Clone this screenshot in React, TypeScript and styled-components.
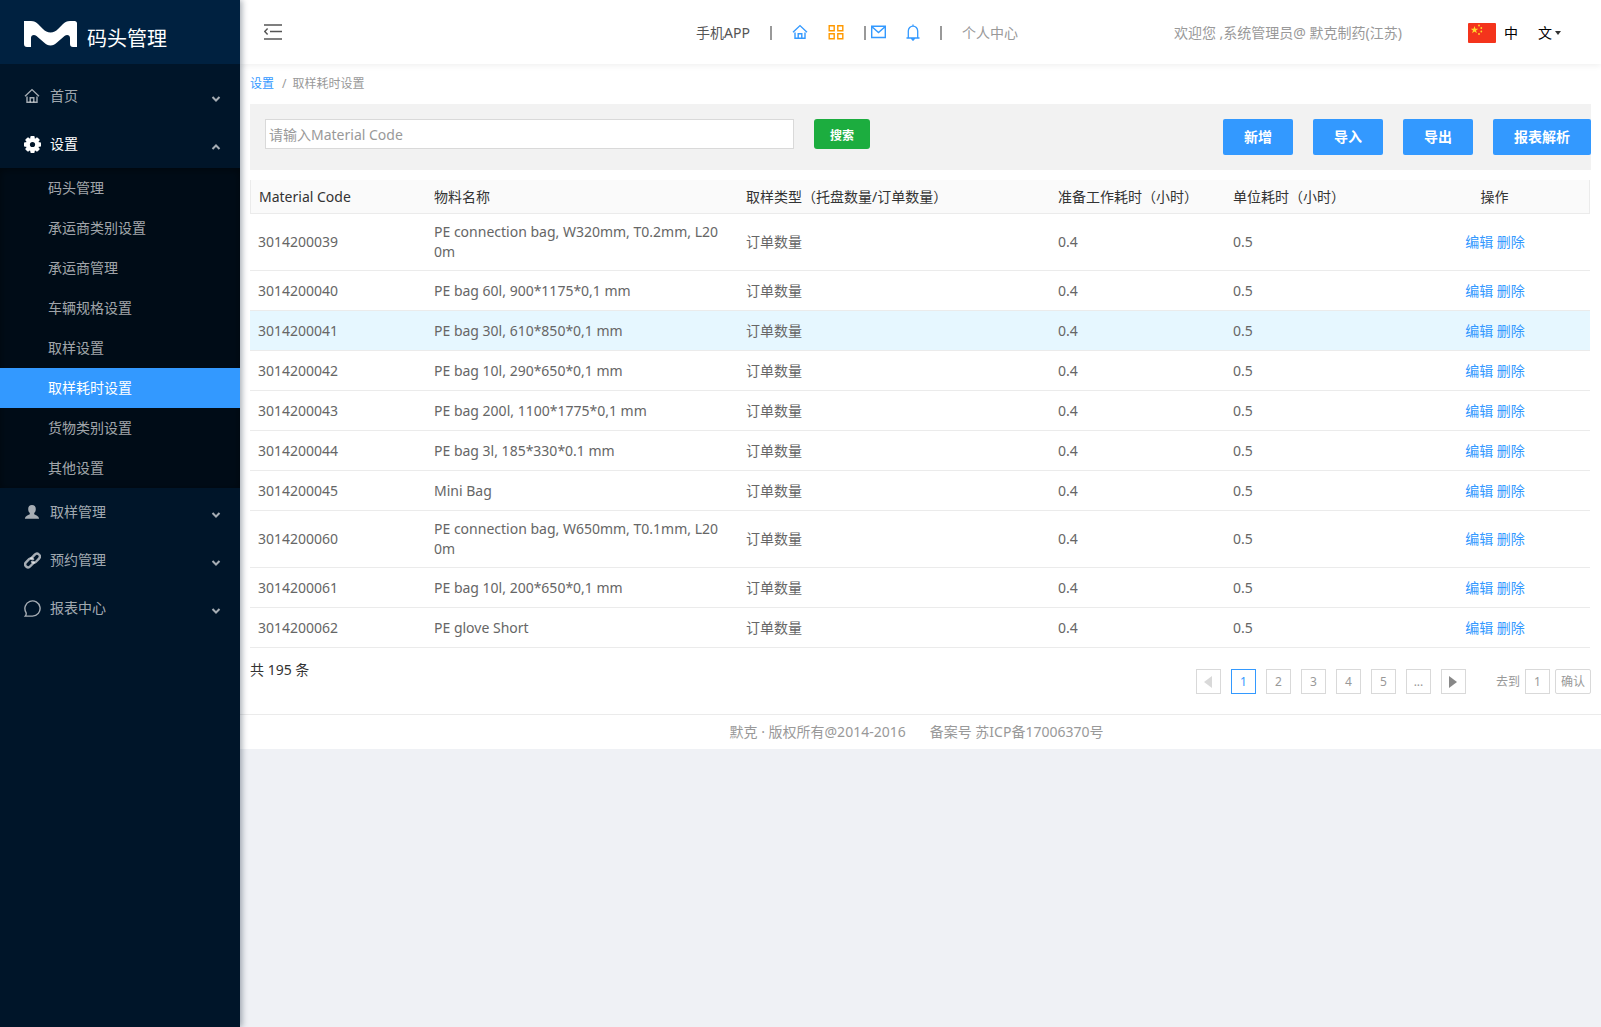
import React, { useState } from "react";
import styled, { createGlobalStyle, css } from "styled-components";

const BLUE = "#3399ff";

const GlobalStyle = createGlobalStyle`
  *, *::before, *::after { box-sizing: border-box; }
  html, body, #root { min-height: 100vh; }
  body {
    margin: 0;
    background: #eff1f5;
    color: #333;
    font: 14px/20px "Noto Sans", "Noto Sans CJK SC", sans-serif;
  }
  button, input, select { font: inherit; }
  a { text-decoration: none; }
`;

const Shell = styled.div`
  display: flex;
  min-height: 100vh;
`;

const Sidebar = styled.aside`
  position: relative;
  z-index: 1;
  flex: none;
  width: 240px;
  background: #001529;
  box-shadow: 2px 0 6px rgba(0, 21, 41, 0.35);
`;

const Brand = styled.div`
  display: flex;
  align-items: center;
  gap: 10px;
  height: 64px;
  padding: 4px 24px 0;
  background: #002140;
  color: #fff;
`;

const BrandMark = styled.svg`
  width: 53px;
  height: 26px;
`;

const BrandName = styled.span`
  padding-top: 10px;
  font-size: 20px;
  line-height: 24px;
`;

const Menu = styled.ul`
  margin: 0;
  padding: 8px 0 0;
  list-style: none;
`;

const MenuButton = styled.button<{ $open?: boolean }>`
  display: flex;
  align-items: center;
  gap: 10px;
  width: 100%;
  height: 48px;
  padding: 0 18px 0 24px;
  border: 0;
  background: none;
  color: ${(p) => (p.$open ? "#fff" : "rgba(255, 255, 255, 0.65)")};
  text-align: left;
  cursor: pointer;

  svg { flex: none; }
`;

const MenuIcon = styled.span`
  display: flex;
  justify-content: center;
  width: 16px;
`;

const MenuLabel = styled.span`
  flex: 1;
`;

const Chevron = styled.svg<{ $up?: boolean }>`
  width: 12px;
  height: 12px;
  margin-top: 6px;
  color: rgba(255, 255, 255, 0.65);
  ${(p) => p.$up && css`transform: rotate(180deg);`}
`;

const SubMenu = styled.ul`
  margin: 0;
  padding: 0;
  list-style: none;
  background: #000c17;
  box-shadow: inset 0 2px 8px rgba(0, 0, 0, 0.45);
`;

const SubLink = styled.a<{ $active?: boolean }>`
  display: block;
  padding: 0 48px;
  line-height: 40px;
  color: ${(p) => (p.$active ? "#fff" : "rgba(255, 255, 255, 0.65)")};
  background: ${(p) => (p.$active ? BLUE : "transparent")};
`;

const Main = styled.div`
  flex: 1;
  min-width: 0;
`;

const TopBar = styled.header`
  position: relative;
  display: flex;
  align-items: center;
  height: 64px;
  padding: 2px 40px 0 24px;
  background: #fff;
  box-shadow: 0 2px 6px rgba(0, 0, 0, 0.06);
`;

const IconButton = styled.button`
  display: flex;
  padding: 0 0 2px;
  border: 0;
  background: none;
  color: #555;
  cursor: pointer;
`;

const QuickNav = styled.nav`
  display: flex;
  align-items: center;
  flex: 1;
  justify-content: flex-end;
  gap: 20px;
`;

const NavText = styled.a<{ $dark?: boolean }>`
  color: ${(p) => (p.$dark ? "#555" : "#999")};
  white-space: nowrap;
`;

const NavIcon = styled.a<{ $color: string }>`
  display: flex;
  padding-bottom: 2px;
  color: ${(p) => p.$color};
`;

const MailGroup = styled.span`
  display: flex;
  align-items: center;
  gap: 5px;
`;

const Bar = styled.span`
  width: 2px;
  height: 14px;
  background: #999;
`;

const Welcome = styled.span`
  margin: 0 66px 0 156px;
  color: #999;
  white-space: nowrap;
`;

const Language = styled.div`
  display: flex;
  align-items: center;
  gap: 8px;
  color: #000;
`;

const LanguageButton = styled.button`
  display: flex;
  align-items: center;
  gap: 3px;
  margin-left: 12px;
  padding: 0;
  border: 0;
  background: none;
  color: #000;
  cursor: pointer;
`;

const Page = styled.main`
  padding: 10px 10px 20px;
  background: #fff;
`;

const Crumbs = styled.nav`
  display: flex;
  gap: 6px;
  margin-bottom: 10px;
  color: #999;
  font-size: 12px;

  a { margin-right: 2px; color: ${BLUE}; }
`;

const Toolbar = styled.form`
  display: flex;
  align-items: flex-start;
  gap: 20px;
  min-height: 66px;
  padding: 15px 0 15px 15px;
  margin-bottom: 10px;
  background: #f2f2f2;
`;

const SearchInput = styled.input`
  flex: 0 1 529px;
  min-width: 120px;
  height: 30px;
  padding: 0 3px;
  border: 1px solid #d9d9d9;
  outline: 0;
  color: #333;

  &::placeholder { color: #999; }
`;

const SearchButton = styled.button`
  width: 56px;
  height: 30px;
  padding: 3px 0 0;
  border: 0;
  border-radius: 3px;
  background: #1cad3f;
  color: #fff;
  font-size: 12px;
  font-weight: 700;
`;

const Actions = styled.div`
  display: flex;
  gap: 20px;
  margin-left: auto;
`;

const ActionButton = styled.button`
  height: 36px;
  padding: 0 21px;
  border: 0;
  border-radius: 2px;
  background: ${BLUE};
  color: #fff;
  font-weight: 700;
  white-space: nowrap;
`;

const Table = styled.table`
  width: calc(100% - 1px);
  table-layout: fixed;
  border-spacing: 0;
  border-collapse: separate;
`;

const HeadCell = styled.th<{ $center?: boolean }>`
  height: 34px;
  padding: 0 8px;
  border-bottom: 1px solid #ebebeb;
  background: #fafafa;
  font-weight: 400;
  text-align: ${(p) => (p.$center ? "center" : "left")};
  white-space: nowrap;

  &:first-child { border-left: 1px solid #ebebeb; }
  &:last-child { border-right: 1px solid #ebebeb; }
`;

const Row = styled.tr<{ $active?: boolean }>`
  background: ${(p) => (p.$active ? "#e6f7ff" : "#fff")};
`;

const Cell = styled.td<{ $center?: boolean }>`
  height: 40px;
  padding: ${(p) => (p.$center ? "8px" : "8px 16px 8px 8px")};
  border-bottom: 1px solid #ebebeb;
  color: #666;
  text-align: ${(p) => (p.$center ? "center" : "left")};
  word-break: break-all;

  a { color: ${BLUE}; }
`;

const TableFoot = styled.div`
  display: flex;
  justify-content: space-between;
  padding-top: 12px;
`;

const Pager = styled.div`
  display: flex;
  align-items: flex-start;
  gap: 10px;
  padding-top: 9px;
  color: #999;
  font-size: 12px;
`;

const boxed = css`
  width: 25px;
  height: 25px;
  padding: 0;
  border: 1px solid #d9d9d9;
  background: #fff;
  color: #999;
  text-align: center;
`;

const PageButton = styled.button<{ $active?: boolean }>`
  ${boxed}
  display: flex;
  align-items: center;
  justify-content: center;
  ${(p) => p.$active && css`border-color: ${BLUE}; color: ${BLUE};`}
`;

const Jump = styled.div`
  display: flex;
  align-items: center;
  gap: 5px;
  margin-left: 20px;
`;

const JumpInput = styled.input`
  ${boxed}
`;

const JumpButton = styled.button`
  ${boxed}
  width: 36px;
  border-radius: 2px;
`;

const Footer = styled.footer`
  display: flex;
  justify-content: center;
  gap: 24px;
  padding: 7px 8px 7px 0;
  border-top: 1px solid #ebebeb;
  background: #fff;
  color: #999;
`;

const HomeIcon = () => (
  <svg width="16" height="16" viewBox="0 0 16 16" fill="none" stroke="currentColor" strokeWidth="1.4">
    <path d="M1 8.300 8 1.600l7 6.700" />
    <path d="M3 8.500v5.800h10V8.500" />
    <path d="M6.200 14.300V9.700h3.600v4.600" />
  </svg>
);

const GearIcon = () => (
  <svg width="17" height="17" viewBox="0 0 17 17">
    <g fill="currentColor">
      {[0, 45, 90, 135].map((a) => (
        <rect key={a} x="6.3" y="0" width="4.4" height="17" rx="1" transform={`rotate(${a} 8.5 8.5)`} />
      ))}
      <circle cx="8.5" cy="8.5" r="6.6" />
    </g>
    <circle cx="8.5" cy="8.5" r="2.6" fill="#001529" />
  </svg>
);

const UserIcon = () => (
  <svg width="16" height="16" viewBox="0 0 16 16" fill="currentColor">
    <path d="M8 1c2.400 0 3.800 1.600 3.800 4 0 1.800-.6 3.300-1.600 4.100v1.200c.8.700 4.600 1.400 4.900 4.500H.9c.3-3.100 4.100-3.800 4.900-4.500V9.100C4.800 8.300 4.200 6.800 4.200 5c0-2.400 1.400-4 3.800-4z" />
  </svg>
);

const LinkIcon = () => (
  <svg width="17" height="17" viewBox="0 0 17 17" fill="none" stroke="currentColor" strokeWidth="2.4" strokeLinecap="round">
    <path d="M7.200 6.400 10.800 2.600a2.900 2.900 0 0 1 4.200 4L12 9.700a2.700 2.700 0 0 1-3.900.1" />
    <path d="M9.800 10.600 6.300 14.300a2.900 2.900 0 0 1-4.300-3.900L5.100 7.200a2.700 2.700 0 0 1 3.900 0" />
  </svg>
);

const ChatIcon = () => (
  <svg width="17" height="17" viewBox="0 0 17 17" fill="none" stroke="currentColor" strokeWidth="1.4">
    <path d="M1.200 16.100h7.300a7.600 7.600 0 1 0-6.600-3.800c.6 1.200.3 2.600-.7 3.800z" />
  </svg>
);

const FoldIcon = () => (
  <svg width="18" height="16" viewBox="0 0 18 16" fill="none" stroke="currentColor" strokeWidth="1.4">
    <path d="M0 1h18M6 7.500h12M0 15h18M3.600 4.600.8 7.500l2.800 2.900" />
  </svg>
);

const GridIcon = () => (
  <svg width="16" height="16" viewBox="0 0 16 16" fill="none" stroke="currentColor" strokeWidth="1.4">
    <path d="M1.200 1.700h5v5h-5zM9.800 1.700h5v5h-5zM1.200 9.800h5v5h-5zM9.800 9.800h5v5h-5z" />
  </svg>
);

const MailIcon = () => (
  <svg width="15" height="14" viewBox="0 0 15 14" fill="none" stroke="currentColor" strokeWidth="1.4">
    <path d="M.7 1.200h13.600v11.300H.7zM1 1.700l6.500 5.800L14 1.700" />
  </svg>
);

const BellIcon = () => (
  <svg width="14" height="17" viewBox="0 0 14 17" fill="none" stroke="currentColor" strokeWidth="1.3">
    <path d="M.5 14h13M2.300 14V7a4.700 4.900 0 0 1 9.400 0v7M7 .4v1.700M5.600 14.600h2.800l-1.400 1.600z" />
  </svg>
);

const Flag = () => (
  <svg width="28" height="20" viewBox="0 0 28 20" role="img" aria-label="中国">
    <rect width="28" height="20" rx="1" fill="#f4341c" />
    <g fill="#ffda2c">
      <path d="m6.500 3 .95 2.700 2.850.05-2.300 1.700.85 2.750L6.500 8.600l-2.350 1.600.85-2.750-2.300-1.700 2.850-.05z" />
      <circle cx="11" cy="2.500" r=".9" />
      <circle cx="13.300" cy="5" r=".9" />
      <circle cx="13.300" cy="8.500" r=".9" />
      <circle cx="11" cy="11" r=".9" />
    </g>
  </svg>
);

const Arrow = ({ left }: { left?: boolean }) => (
  <svg width="8" height="12" viewBox="0 0 8 12" fill={left ? "#d9d9d9" : "#888"}>
    <path d={left ? "M8 0v12L0 6z" : "M0 0v12l8-6z"} />
  </svg>
);

const SUB_ITEMS = ["码头管理", "承运商类别设置", "承运商管理", "车辆规格设置", "取样设置", "取样耗时设置", "货物类别设置", "其他设置"];

const MENU = [
  { label: "首页", icon: <HomeIcon /> },
  { label: "设置", icon: <GearIcon />, items: SUB_ITEMS },
  { label: "取样管理", icon: <UserIcon /> },
  { label: "预约管理", icon: <LinkIcon /> },
  { label: "报表中心", icon: <ChatIcon /> },
];

const COLUMNS = [
  { title: "Material Code", width: 176 },
  { title: "物料名称", width: 312 },
  { title: "取样类型（托盘数量/订单数量）", width: 312 },
  { title: "准备工作耗时（小时）", width: 175 },
  { title: "单位耗时（小时）", width: 175 },
  { title: "操作", width: 190, center: true },
];

const ROWS: [string, string][] = [
  ["3014200039", "PE connection bag, W320mm, T0.2mm, L200m"],
  ["3014200040", "PE bag 60l, 900*1175*0,1 mm"],
  ["3014200041", "PE bag 30l, 610*850*0,1 mm"],
  ["3014200042", "PE bag 10l, 290*650*0,1 mm"],
  ["3014200043", "PE bag 200l, 1100*1775*0,1 mm"],
  ["3014200044", "PE bag 3l, 185*330*0.1 mm"],
  ["3014200045", "Mini Bag"],
  ["3014200060", "PE connection bag, W650mm, T0.1mm, L200m"],
  ["3014200061", "PE bag 10l, 200*650*0,1 mm"],
  ["3014200062", "PE glove Short"],
];

export default function App() {
  const [open, setOpen] = useState("设置");
  const [page, setPage] = useState("1");
  const [target, setTarget] = useState("1");

  return (
    <>
      <GlobalStyle />
      <Shell>
        <Sidebar>
          <Brand>
            <BrandMark viewBox="0 0 53 26" fill="currentColor" aria-hidden="true">
              <path d="M0 0h7c3 0 5 1 7 3l5 5c2 2 4.500 3.500 7.500 3.500S32 10 34 8l5-5c2-2 4-3 7-3h4.500A2.500 2.500 0 0 1 53 2.500V26h-4a3 3 0 0 1-3-3v-6c0-3-3-4-5.500-2L33 21.500c-2 1.700-4 3-6.500 3s-4.500-1.300-6.500-3L12.500 15C10 13 7 14 7 17v9H3a3 3 0 0 1-3-3z" />
            </BrandMark>
            <BrandName>码头管理</BrandName>
          </Brand>
          <Menu>
            {MENU.map(({ label, icon, items }) => (
              <li key={label}>
                <MenuButton
                  type="button"
                  $open={open === label}
                  aria-expanded={open === label}
                  onClick={() => setOpen(open === label ? "" : label)}
                >
                  <MenuIcon>{icon}</MenuIcon>
                  <MenuLabel>{label}</MenuLabel>
                  <Chevron $up={open === label} viewBox="0 0 12 12" fill="none" stroke="currentColor" strokeWidth="2">
                    <path d="m2.500 4 3.500 3.500L9.500 4" />
                  </Chevron>
                </MenuButton>
                {items && open === label && (
                  <SubMenu>
                    {items.map((item) => (
                      <li key={item}>
                        <SubLink href="#" $active={item === "取样耗时设置"}>{item}</SubLink>
                      </li>
                    ))}
                  </SubMenu>
                )}
              </li>
            ))}
          </Menu>
        </Sidebar>

        <Main>
          <TopBar>
            <IconButton type="button" aria-label="收起菜单"><FoldIcon /></IconButton>
            <QuickNav>
              <NavText href="#" $dark>手机APP</NavText>
              <Bar />
              <NavIcon href="#" $color={BLUE} aria-label="首页"><HomeIcon /></NavIcon>
              <NavIcon href="#" $color="#ff9900" aria-label="应用"><GridIcon /></NavIcon>
              <MailGroup>
                <Bar />
                <NavIcon href="#" $color={BLUE} aria-label="邮件"><MailIcon /></NavIcon>
              </MailGroup>
              <NavIcon href="#" $color={BLUE} aria-label="通知"><BellIcon /></NavIcon>
              <Bar />
              <NavText href="#">个人中心</NavText>
            </QuickNav>
            <Welcome>欢迎您 ,系统管理员@ 默克制药(江苏)</Welcome>
            <Language>
              <Flag />
              <span>中</span>
              <LanguageButton type="button">
                文
                <svg width="6" height="4" viewBox="0 0 6 4" fill="#333"><path d="M0 0h6L3 4z" /></svg>
              </LanguageButton>
            </Language>
          </TopBar>

          <Page>
            <Crumbs>
              <a href="#">设置</a>
              <span>/</span>
              <span>取样耗时设置</span>
            </Crumbs>
            <Toolbar onSubmit={(e) => e.preventDefault()}>
              <SearchInput aria-label="Material Code" placeholder="请输入Material Code" />
              <SearchButton type="submit">搜索</SearchButton>
              <Actions>
                {["新增", "导入", "导出", "报表解析"].map((label) => (
                  <ActionButton key={label} type="button">{label}</ActionButton>
                ))}
              </Actions>
            </Toolbar>

            <Table>
              <colgroup>
                {COLUMNS.map((c) => <col key={c.title} width={c.width} />)}
              </colgroup>
              <thead>
                <tr>
                  {COLUMNS.map((c) => <HeadCell key={c.title} scope="col" $center={c.center}>{c.title}</HeadCell>)}
                </tr>
              </thead>
              <tbody>
                {ROWS.map(([code, name]) => (
                  <Row key={code} $active={code === "3014200041"}>
                    <Cell>{code}</Cell>
                    <Cell>{name}</Cell>
                    <Cell>订单数量</Cell>
                    <Cell>0.4</Cell>
                    <Cell>0.5</Cell>
                    <Cell $center><a href="#">编辑</a> <a href="#">删除</a></Cell>
                  </Row>
                ))}
              </tbody>
            </Table>

            <TableFoot>
              <span>共 195 条</span>
              <Pager>
                <PageButton type="button" aria-label="上一页"><Arrow left /></PageButton>
                {["1", "2", "3", "4", "5", "..."].map((n) => (
                  <PageButton key={n} type="button" $active={n === page} onClick={() => setPage(n)}>{n}</PageButton>
                ))}
                <PageButton type="button" aria-label="下一页"><Arrow /></PageButton>
                <Jump>
                  <label htmlFor="jump">去到</label>
                  <JumpInput id="jump" value={target} onChange={(e) => setTarget(e.target.value)} />
                  <JumpButton type="button" onClick={() => setPage(target)}>确认</JumpButton>
                </Jump>
              </Pager>
            </TableFoot>
          </Page>
          <Footer>
            <span>默克 · 版权所有@2014-2016</span>
            <span>备案号 苏ICP备17006370号</span>
          </Footer>
        </Main>
      </Shell>
    </>
  );
}
